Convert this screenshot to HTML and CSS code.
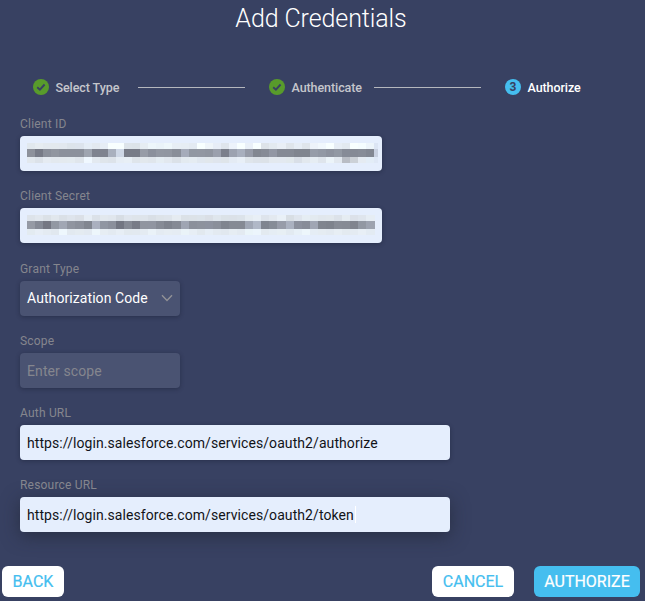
FILE: index.html
```html
<!DOCTYPE html>
<html lang="en">
<head>
<meta charset="utf-8">
<title>Add Credentials</title>
<link rel="stylesheet" href="styles.css">
</head>
<body>
<main class="dialog">
  <h1 class="title">Add Credentials</h1>
  <div class="steps">
    <div class="step step-select">
      <svg class="badge" viewBox="0 0 16 16"><circle cx="8" cy="8" r="8" fill="#589b2b"/><path d="M4.2 8.3 6.9 10.7 11.6 5.5" fill="none" stroke="#384162" stroke-width="1.9"/></svg>
      <span>Select Type</span><i class="line"></i>
    </div>
    <div class="step step-auth">
      <svg class="badge" viewBox="0 0 16 16"><circle cx="8" cy="8" r="8" fill="#589b2b"/><path d="M4.2 8.3 6.9 10.7 11.6 5.5" fill="none" stroke="#384162" stroke-width="1.9"/></svg>
      <span>Authenticate</span><i class="line"></i>
    </div>
    <div class="step current">
      <b class="badge number">3</b>
      <span>Authorize</span>
    </div>
  </div>
  <form class="form">
    <div class="field"><label>Client ID</label><div class="control filled medium"><svg class="mask" id="client-id" viewBox="0 0 351 20"></svg></div></div>
    <div class="field"><label>Client Secret</label><div class="control filled medium"><svg class="mask" id="client-secret" viewBox="0 0 351 20"></svg></div></div>
    <div class="field"><label>Grant Type</label><div class="control select"><span>Authorization Code</span><svg class="chevron" viewBox="0 0 12 8"><path d="M1 1.3 6 6.4 11 1.3" fill="none" stroke="#929296" stroke-width="1.4"/></svg></div></div>
    <div class="field"><label>Scope</label><div class="control placeholder">Enter scope</div></div>
    <div class="field"><label>Auth URL</label><div class="control filled wide">https://login.salesforce.com/services/oauth2/authorize</div></div>
    <div class="field"><label>Resource URL</label><div class="control filled wide focused">https://login.salesforce.com/services/oauth2/token<i class="caret"></i></div></div>
  </form>
  <footer class="actions">
    <button class="button back">BACK</button>
    <button class="button cancel">CANCEL</button>
    <button class="button primary">AUTHORIZE</button>
  </footer>
</main>
<script src="mask.js"></script>
</body>
</html>
```
FILE: styles.css
```css
* { box-sizing: border-box; }
body {
  margin: 0;
  background: #384162;
  color: #fff;
  font-family: Roboto, "Liberation Sans", sans-serif;
}
.dialog { width: 645px; height: 601px; overflow: hidden; }
.title {
  margin: 0;
  padding-right: 3px;
  height: 79px;
  line-height: 37px;
  font-size: 25px;
  font-weight: 300;
  letter-spacing: -0.1px;
  text-align: center;
}
.steps {
  display: grid;
  grid-template-columns: 236px 236px 1fr;
  height: 36px;
  padding-left: 33px;
}
.step {
  display: flex;
  align-items: center;
  gap: 6px;
  height: 16px;
  font-size: 12.5px;
  font-weight: 500;
  letter-spacing: -0.08px;
  color: #c5c6cc;
  white-space: nowrap;
}
.step span { padding-left: 0.5px; }
.current { color: #fff; }
.badge { flex: none; width: 16px; height: 16px; }
.number {
  border-radius: 50%;
  background: #45beef;
  color: #384162;
  font-size: 12px;
  line-height: 16px;
  text-align: center;
}
.line { width: 107px; height: 1px; margin-left: auto; background: #b5b7bd; }
.step-select .line, .step-auth .line { margin-right: 24px; }
.form { padding-left: 20px; display: grid; grid-template-rows: 72px 72.5px 72.5px 72px 72px 72px; }
label {
  display: block;
  height: 21px;
  line-height: 18px;
  font-size: 12px;
  letter-spacing: 0.2px;
  color: #85868e;
}
.control {
  display: flex;
  align-items: center;
  width: 160px;
  height: 35px;
  padding: 0 7px;
  border-radius: 4px;
  background: #4a5372;
  box-shadow: 0 1px 4px rgba(22, 28, 48, 0.45);
  font-size: 14px;
  letter-spacing: 0.08px;
  white-space: nowrap;
}
.filled { background: #e5eefd; color: #111318; }
.medium { width: 362px; }
.wide { width: 430px; }
.focused { box-shadow: 0 4px 18px rgba(32, 37, 50, 0.65); }
.placeholder { color: #85868e; letter-spacing: 0.1px; }
.select { justify-content: space-between; }
.chevron { width: 12px; height: 8px; }
.mask { flex: none; width: 351px; height: 20px; margin-top: -1px; }
.caret { width: 1px; height: 17px; background: #fff; margin-left: 1px; }
.actions { display: flex; align-items: flex-start; padding: 18px 5px 0 2px; }
.button {
  height: 31px;
  padding: 0;
  border: 0;
  border-radius: 6px;
  background: #fff;
  color: #45beef;
  font: 400 16px/31px Roboto, sans-serif;
  -webkit-text-stroke: 0.2px currentColor;
}
.back { width: 62px; }
.cancel { width: 82px; margin-left: auto; }
.primary { width: 106px; margin-left: 20px; background: #45beef; color: #fff; }
```
FILE: mask.js
```js
// Paint the obscured credential values as rows of blocks.
const masks = {
  "client-id": [
    "e1e8ee e6ecf1 e3e9ef e3e9ee e2e8ef dde4eb dde4ed e5edf6 e3e9f0 e6edf5 f8ffff f8ffff dde4ea dce3e9 e6edf3 edf6fb eaf3f9 eef7fb e7eef5 e6edf4 e3eaf2 f8ffff eff5fa e7edf7 dfe5ec edf3fb f8ffff e9f0f8 f8ffff dde3e9 e3eaf0 e9eff6 dfe5eb e6edf5 dfe5eb edf3fa f1f8fd f8ffff e6edf5 e2e9f0 f8ffff f5fdff edf5fb dce5f4",
    "8d919b 777b87 8b909b 9196a0 8c919c 8c919c 8c919c 9fa5b0 7f838f 7f838f a9b0be ced7e6 787c88 787c88 979ca7 8b909c 9297a2 9196a1 898e99 a5abba 9197a2 9297a2 9095a0 9ba0ad 7c808c 9ca2b0 a8afbe 969ba8 828791 868b96 9297a4 858a95 858a95 80858f 80858f 969ca8 9298a4 8d929e 9298a3 868b97 858a95 878c97 828792 c8d0e0",
    "e2e8ee dce2e9 e5ebf2 e3e9ef e4eaef e4ebf0 e0e6ec f0f8ff e3e9f0 dfe5eb dde3ea e6edf5 e8eff6 dfe5eb e2e8ed e0e6ec e5edf3 e2e8ef dbe1e8 e3eaf0 e5ecf2 e0e7ef e1e7ec dfe5ed dfe5ea e4ebf4 e8eff7 dfe5eb dce2e9 dce2e8 e3e9ef e3e9f0 e2e9ed d9dfe7 e2e8ee e6edf3 dfe5ec ecf4f9 e2e8ef b9bdc5 ccd1d7 e5ebf2 e3edf7 dfe8f6"
  ],
  "client-secret": [
    "dde3ea e1e7ee dbe1e7 e1e7ed dae0e7 dee4ec dbe0e7 e6edf5 dbe1e8 e2e8ee e0e6ed d7dde4 dfe5ed dee4ea dee4eb d9dfe6 dde3e9 dee4eb e5ebf1 dbe1e7 dce2e8 dce3ea dadfe6 dfe6ed dbe2e8 dbe1e8 dce3ea e5ecf2 e8eff6 dee4ec e3e9f0 e9f0f7 d8dee4 dfe5ed e5edf3 e3eaf0 e1e7ed e2e8ed dce2e9 e5ecf2 dce1e9 dfe5ed e6edf4",
    "959aa5 858a96 747783 9298a3 a1a7b4 9095a0 8b909b 818690 aab0bf 9096a2 8b909c 727682 858a95 787c88 9095a0 9095a1 868b96 7e838e 858a95 9fa5b3 8b909b 8d929d 8d929f 8a8f9a 80858f 858a94 858a94 a0a7b5 b0b8c7 7f8590 868c97 979ca9 aab1c0 8b909d 878c98 a0a6b4 80858f 7e838d 878c96 868b95 80848e 9298a3 9da3b0",
    "e3ebf1 e7eef6 e4ebf2 e1e8ef eef7fd e2e9f0 e4ebf1 e2e9f1 edf6fb e6edf3 e3eaf1 e7eef5 e2e9ef e2e9f0 e4ebf2 eaf2f8 e4ebf2 e6edf3 e5ecf3 eaf3f8 e7eef5 e2e9ef e6eef6 e3eaf1 e1e8ef e6edf3 e3eaf1 eaf4f9 ecf5fc e3eaf0 e5edf4 e7eff4 e2eaf1 e7f0f7 edf6fb e5edf5 e5ecf2 e3eaf1 e7eef4 e3eaf0 e4ebf2 e8eff6 e3ebf3"
  ]
};
const rows = [[0, 6], [6, 8], [14, 5.5]];
for (const [id, colors] of Object.entries(masks)) {
  const svg = document.getElementById(id);
  colors.forEach((line, r) => line.split(" ").forEach((color, c) => {
    const rect = document.createElementNS("http://www.w3.org/2000/svg", "rect");
    rect.setAttribute("x", c * 8.08);
    rect.setAttribute("y", rows[r][0]);
    rect.setAttribute("width", c === 43 ? 3.5 : 8.2);
    rect.setAttribute("height", rows[r][1]);
    rect.setAttribute("fill", "#" + color);
    rect.setAttribute("shape-rendering", "crispEdges");
    svg.append(rect);
  }));
}
```
